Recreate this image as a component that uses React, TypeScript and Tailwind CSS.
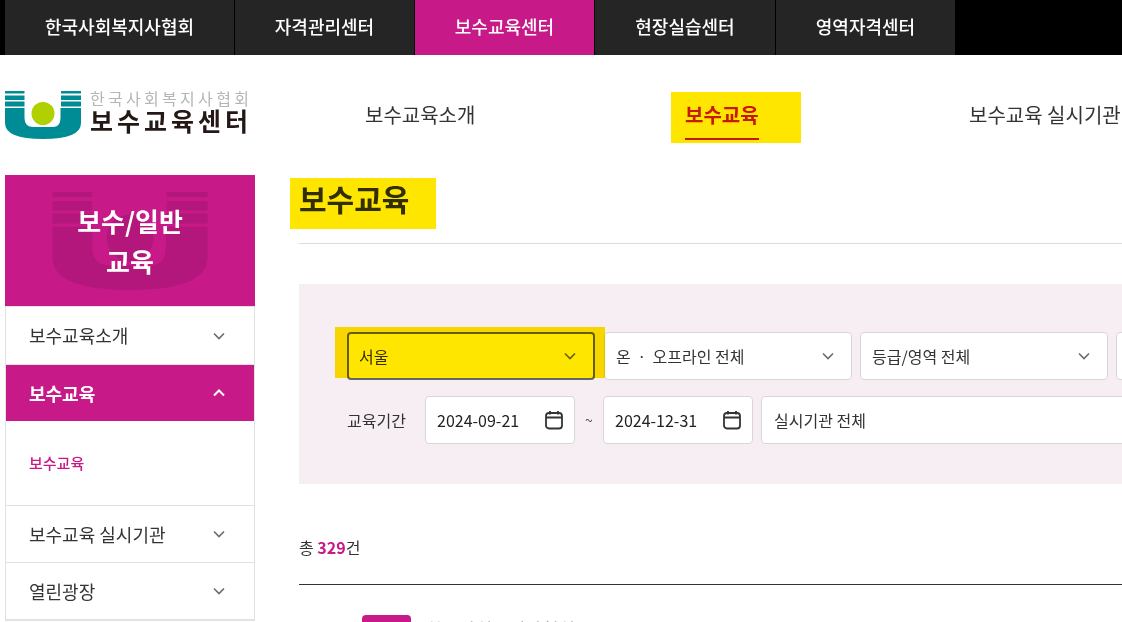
const M = "bg-[#c71a88]";

function Chevron({ up = false, cls = "text-[#6b6b6b]" }: { up?: boolean; cls?: string }) {
  return (
    <svg width="12" height="8" viewBox="0 0 12 8" fill="none" className={cls}>
      <path d={up ? "M1 6.5 6 1.5l5 5" : "M1 1.5l5 5 5-5"} stroke="currentColor" strokeWidth={up ? 2 : 1.6} />
    </svg>
  );
}

function Calendar() {
  return (
    <svg width="18" height="20" viewBox="0 0 18 20" fill="none" stroke="#333" strokeWidth="1.8">
      <rect x="1" y="3" width="16" height="15.5" rx="3" />
      <path d="M1 7.5h16M5 1v3.5M13 1v3.5" />
    </svg>
  );
}

function LogoMark({ fill, ball }: { fill: string; ball: string }) {
  return (
    <svg viewBox="0 0 76 48" width="100%" height="100%" fill={fill}>
      <rect x="0" y="0" width="19.500" height="2.500" />
      <rect x="0" y="4.500" width="19.500" height="4.500" />
      <rect x="0" y="10.500" width="19.500" height="5" />
      <rect x="56" y="0" width="20" height="2.500" />
      <rect x="56" y="4.500" width="20" height="4.500" />
      <rect x="56" y="10.500" width="20" height="5" />
      <path d="M0 17h19.500V27q0 9 9 9h19q8 0 8-9V17H76V32q0 16-38 16T0 32z" />
      <circle cx="38" cy="22.500" r="11.500" fill={ball} />
    </svg>
  );
}

function TopItem({ label, active = false, w = "w-[179px]" }: { label: string; active?: boolean; w?: string }) {
  return (
    <div
      className={`flex h-full ${w} shrink-0 items-center justify-center pb-[3px] text-[18px] font-medium text-white ${
        active ? M : "bg-[#252525]"
      }`}
    >
      {label}
    </div>
  );
}

function SelectBox({ label, cls }: { label: string; cls: string }) {
  return (
    <div className={`flex h-[48px] w-[248px] shrink-0 items-center justify-between rounded-[4px] bg-white pb-[1px] pr-[17px] text-[16px] text-[#333] ${cls}`}>
      <span>{label}</span>
      <Chevron />
    </div>
  );
}

function DateBox({ value }: { value: string }) {
  return (
    <div className="flex h-[48px] w-[150px] shrink-0 items-center justify-between rounded-[4px] border border-[#d9d5d8] bg-white pl-[11px] pr-[11px] text-[16px] text-[#222]">
      <span>{value}</span>
      <Calendar />
    </div>
  );
}

function SideRow({ label, cls }: { label: string; cls: string }) {
  return (
    <div className={`flex items-center justify-between border-[#e2e2e2] pl-[23px] pr-[29px] text-[18px] text-[#333] ${cls}`}>
      <span>{label}</span>
      <Chevron />
    </div>
  );
}

export default function App() {
  const plain = "border border-[#d9d5d8] pl-[11px]";
  return (
    <div
      className="relative h-[622px] w-[1122px] overflow-hidden bg-white"
      style={{ fontFamily: '"Noto Sans CJK KR", "Noto Sans", sans-serif' }}
    >
      {/* top bar */}
      <div className="flex h-[55px] gap-px bg-black pl-[5px]">
        <TopItem label="한국사회복지사협회" w="w-[229px]" />
        <TopItem label="자격관리센터" />
        <TopItem label="보수교육센터" active />
        <TopItem label="현장실습센터" w="w-[180px]" />
        <TopItem label="영역자격센터" />
      </div>

      {/* header */}
      <div className="flex h-[120px] items-start pl-[5px]">
        <div className="mt-[36px] flex w-[245px] shrink-0 items-start">
          <div className="h-[48px] w-[76px] shrink-0">
            <LogoMark fill="#008c95" ball="#b1d000" />
          </div>
          <div className="ml-[9px] flex flex-col whitespace-nowrap">
            <span className="text-[16px] leading-[15px] tracking-[3.3px] text-[#b5b5b5]">한국사회복지사협회</span>
            <span className="mt-[2px] text-[25px] font-bold leading-[25px] tracking-[4px] text-[#231815]">보수교육센터</span>
          </div>
        </div>
        <nav className="ml-[115px] flex shrink-0 text-[20px] text-[#333]">
          <span className="mt-[45px] w-[320px] leading-[30px]">보수교육소개</span>
          <span className="mt-[45px] flex w-[284px] flex-col items-start">
            <span className="border-b-2 border-[#c71a88] pb-[8px] font-bold leading-[30px] text-[#c71a88]">보수교육</span>
          </span>
          <span className="mt-[45px] whitespace-nowrap leading-[30px]">보수교육 실시기관</span>
        </nav>
      </div>

      {/* body */}
      <div className="flex pl-[5px]">
        <aside className="w-[250px] shrink-0">
          <div className={`relative flex h-[131px] flex-col items-center justify-center overflow-hidden ${M}`}>
            <div className="absolute left-[47px] top-[17px] h-[98px] w-[156px]">
              <LogoMark fill="#b3177c" ball="#b3177c" />
            </div>
            <span className="relative text-[26px] font-bold leading-[40px] text-white">보수/일반</span>
            <span className="relative text-[26px] font-bold leading-[40px] text-white">교육</span>
          </div>
          <div className="border-x border-t border-[#e2e2e2]">
            <SideRow label="보수교육소개" cls="h-[58px] border-b" />
            <div className={`flex h-[56px] items-center justify-between pl-[23px] pr-[29px] text-[18px] font-bold text-white ${M}`}>
              <span>보수교육</span>
              <Chevron up cls="text-white" />
            </div>
            <div className="flex h-[85px] items-center border-b border-[#e2e2e2] pl-[23px] text-[15px] font-medium text-[#c71a88]">
              보수교육
            </div>
            <SideRow label="보수교육 실시기관" cls="h-[57px] border-b" />
            <SideRow label="열린광장" cls="h-[58px] border-b-2" />
          </div>
        </aside>

        <main className="ml-[44px] w-[900px] shrink-0">
          <h1 className="flex h-[68px] items-start pt-[1px] text-[30px] font-bold leading-[44px] text-[#333]">보수교육</h1>
          <div className="border-t border-[#dcdcdc]" />
          <div className="mt-[40px] flex h-[200px] flex-col gap-[16px] bg-[#f7eef3] pl-[48px] pt-[48px]">
            <div className="flex gap-[8px]">
              <div className="mr-px shrink-0">
                <SelectBox label="서울" cls="border-2 border-[#666] pl-[10px]" />
              </div>
              <SelectBox label="온 ㆍ 오프라인 전체" cls={plain} />
              <SelectBox label="등급/영역 전체" cls={plain} />
              <SelectBox label="" cls={plain} />
            </div>
            <div className="flex items-center">
              <span className="w-[78px] shrink-0 text-[16px] text-[#333]">교육기간</span>
              <DateBox value="2024-09-21" />
              <span className="w-[28px] shrink-0 text-center text-[14px] text-[#555]">~</span>
              <DateBox value="2024-12-31" />
              <div className="ml-[8px] flex h-[48px] w-[500px] shrink-0 items-center rounded-[4px] border border-[#d9d5d8] bg-white pb-[1px] pl-[12px] text-[16px] text-[#333]">
                실시기관 전체
              </div>
            </div>
          </div>
          <p className="mt-[52px] text-[16px] leading-[22px] text-[#333]">
            총 <b className="font-bold text-[#c71a88]">329</b>건
          </p>
          <div className="mt-[26px] border-t border-[#333]" />
          <div className="ml-[63px] mt-[30px] flex items-start gap-[15px]">
            <div className={`h-[40px] w-[49px] rounded-[4px] ${M}`} />
            <span className="pt-[4px] text-[18px] leading-[20px] text-[#777]">한국사회복지사협회</span>
          </div>
        </main>
      </div>

      {/* highlight marks over the page */}
      <div className="absolute left-[671px] top-[92px] h-[51px] w-[130px] bg-[#ffe600] mix-blend-multiply" />
      <div className="absolute left-[290px] top-[178px] h-[51px] w-[146px] bg-[#ffe600] mix-blend-multiply" />
      <div className="absolute left-[335px] top-[327px] h-[51px] w-[270px] bg-[#ffe600] mix-blend-multiply" />
    </div>
  );
}
